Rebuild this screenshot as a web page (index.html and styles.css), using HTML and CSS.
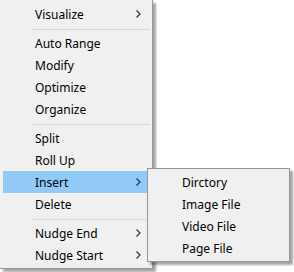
FILE: index.html
```html
<!DOCTYPE html>
<html lang="en">

<head>
    <title>Context Menu</title>
    <link rel="stylesheet" href="styles.css">
</head>

<body>
    <div class="stage">
        <ul class="menu main">
            <li class="item">Visualize<svg class="arrow" width="5" height="8" viewBox="0 0 5 8"><path d="M0.5 0.5 L4 4 L0.5 7.5" /></svg></li>
            <li class="sep"></li>
            <li class="item">Auto Range</li>
            <li class="item">Modify</li>
            <li class="item">Optimize</li>
            <li class="item">Organize</li>
            <li class="sep"></li>
            <li class="item">Split</li>
            <li class="item">Roll Up</li>
            <li class="item active">Insert<svg class="arrow" width="5" height="8" viewBox="0 0 5 8"><path d="M0.5 0.5 L4 4 L0.5 7.5" /></svg></li>
            <li class="item">Delete</li>
            <li class="sep"></li>
            <li class="item">Nudge End<svg class="arrow" width="5" height="8" viewBox="0 0 5 8"><path d="M0.5 0.5 L4 4 L0.5 7.5" /></svg></li>
            <li class="item">Nudge Start<svg class="arrow" width="5" height="8" viewBox="0 0 5 8"><path d="M0.5 0.5 L4 4 L0.5 7.5" /></svg></li>
        </ul>

        <ul class="menu sub">
            <li class="item">Dirctory</li>
            <li class="item">Image File</li>
            <li class="item">Video File</li>
            <li class="item">Page File</li>
        </ul>
    </div>
</body>

</html>
```

FILE: styles.css
```css
* {
    padding: 0;
    margin: 0;
    box-sizing: border-box;
}

body {
    background: #ffffff;
    font-family: "Noto Sans", sans-serif;
    font-size: 12px;
    color: #000000;
}

.stage {
    position: relative;
    width: 294px;
    height: 272px;
}

.menu {
    list-style: none;
    background: #f0f0f0;
    border: 1px solid #979797;
    box-shadow: 3px 3px 2px rgba(0, 0, 0, 0.35);
    padding: 2px;
}

.main {
    width: 153px;
    border-top: none;
    border-left: none;
    padding: 3px 2px 2px 3px;
}

.sub {
    position: absolute;
    left: 147px;
    top: 168px;
    width: 143px;
}

.item {
    height: 22px;
    display: flex;
    align-items: center;
    justify-content: space-between;
    padding: 0 9px 0 32px;
    white-space: nowrap;
}

.sub .item {
    padding-left: 32px;
}

.item.active {
    background: #91c9f7;
}

.arrow {
    fill: none;
    stroke: #333333;
    stroke-width: 1.2;
}

.sep {
    height: 1px;
    background: #d7d7d7;
    margin: 4px 0 2px 28px;
}
```
